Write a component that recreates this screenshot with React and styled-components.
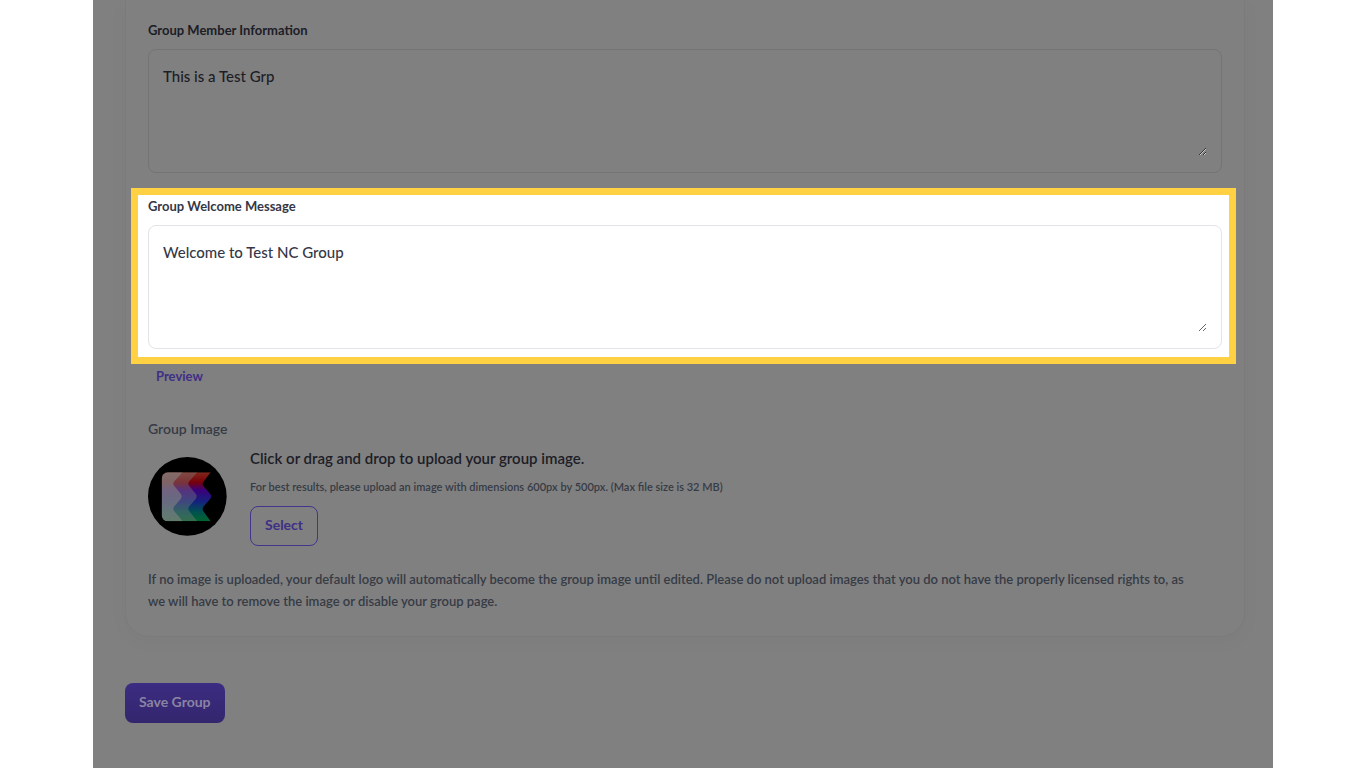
import React from 'react'
import styled, { createGlobalStyle } from 'styled-components'

const GlobalStyle = createGlobalStyle`
  * {
    box-sizing: border-box;
  }
  body {
    margin: 0;
    background: #fff;
    color: #1c1d26;
    font-family: Lato, 'Liberation Sans', sans-serif;
    font-size: 13px;
    font-weight: 500;
  }
  button, textarea {
    font-family: inherit;
    font-weight: inherit;
  }
`

const Page = styled.main`
  max-width: 1180px;
  min-height: 100vh;
  margin: 0 auto;
  padding: 0 28px 46px 32px;
  background: #808080;
`

const Card = styled.section`
  padding: 20px 22px 24px;
  border: 1px solid #7b7b7c;
  border-top: 0;
  border-radius: 0 0 24px 24px;
  box-shadow: 0 4px 20px rgba(0, 0, 0, 0.03);
`

const Field = styled.div`
  display: flex;
  flex-direction: column;
  gap: 9px;
`

const Highlight = styled.div`
  margin: 15px -14px 0 -17px;
  padding: 1px 7px 8px 10px;
  border: 7px solid #ffd143;
  background: #fff;
`

const Label = styled.label`
  color: ${props => props.$lit ? '#363746' : '#1c1d26'};
  font-size: 13px;
  font-weight: 700;
  line-height: 20px;
`

const TextBox = styled.div`
  display: flex;
  height: 124px;
  padding: 14px;
  border: 1px solid ${props => props.$lit ? '#e4e4e8' : '#747476'};
  border-radius: 8px;
`

const TextArea = styled.textarea`
  flex: 1;
  height: 92px;
  padding: 0;
  border: 0;
  outline: 0;
  background: transparent;
  color: ${props => props.$lit ? '#363746' : '#1c1d26'};
  font-size: 15px;
  line-height: 24px;
  resize: vertical;
`

const PreviewLink = styled.a`
  display: block;
  width: fit-content;
  margin: 2px 0 0 8px;
  color: #3f2f86;
  font-weight: 700;
  line-height: 20px;
  text-decoration: none;
`

const ImageHeading = styled.h2`
  margin: 33px 0 9px;
  color: #363b45;
  font-size: 14px;
  font-weight: 600;
  line-height: 20px;
`

const Upload = styled.div`
  display: flex;
  gap: 23px;
`

const Logo = styled.svg`
  flex: none;
  width: 79px;
  height: 79px;
  margin-top: 9px;
`

const UploadTitle = styled.p`
  margin: 0;
  font-size: 15px;
  font-weight: 600;
  line-height: 20px;
`

const UploadHint = styled.p`
  margin: 9px 0;
  color: #363b45;
  font-size: 11px;
  font-weight: 600;
  line-height: 20px;
`

const SelectButton = styled.button`
  height: 40px;
  padding: 0 14px 4px;
  border: 1px solid #44348c;
  border-radius: 8px;
  background: transparent;
  color: #3f2f86;
  font-size: 14px;
  font-weight: 700;
`

const Note = styled.p`
  margin: 22px 0 0;
  padding-right: 24px;
  color: #363b45;
  font-weight: 600;
  line-height: 22px;
`

const SaveButton = styled.button`
  height: 40px;
  margin-top: 46px;
  padding: 0 14px 4px;
  border: 0;
  border-radius: 8px;
  background: linear-gradient(#3c2c82, #33266d);
  color: #8a84a3;
  font-size: 14px;
  font-weight: 700;
`

const GroupLogo = () => (
  <Logo viewBox="0 0 237 237" role="img" aria-label="Group logo">
    <defs>
      <linearGradient id="bands" x1="0" y1="46" x2="0" y2="193" gradientUnits="userSpaceOnUse">
        <stop offset="0" stopColor="#80291b" />
        <stop offset="0.2" stopColor="#780008" />
        <stop offset="0.36" stopColor="#3c007c" />
        <stop offset="0.6" stopColor="#14227e" />
        <stop offset="0.8" stopColor="#005052" />
        <stop offset="1" stopColor="#00662c" />
      </linearGradient>
      <clipPath id="badge">
        <rect x="41" y="46" width="180" height="147" rx="19" />
      </clipPath>
    </defs>
    <circle cx="118" cy="118" r="118" />
    <g clipPath="url(#badge)">
      <path d="M41 46H188L166 75Q162 81 166 87L187 111Q192 118 187 125L166 149Q162 156 166 163L188 193H41Z" fill="url(#bands)" />
      <path d="M41 46H148L124 73Q118 80 124 87L143 110Q149 118 143 126L124 148Q118 155 124 163L148 193H41Z" fill="#808080" fillOpacity="0.4" />
      <path d="M41 46H104L79 73Q73 80 79 87L98 110Q104 118 98 126L79 148Q73 155 79 163L104 193H41Z" fill="#848484" fillOpacity="0.6" />
    </g>
  </Logo>
)

const MessageField = ({ id, label, value, lit }) => (
  <Field>
    <Label htmlFor={id} $lit={lit}>{label}</Label>
    <TextBox $lit={lit}>
      <TextArea id={id} defaultValue={value} $lit={lit} />
    </TextBox>
  </Field>
)

export default function App() {
  return (
    <>
      <GlobalStyle />
      <Page>
        <Card>
          <MessageField id="member-info" label="Group Member Information" value="This is a Test Grp" />
          <Highlight>
            <MessageField id="welcome-message" label="Group Welcome Message" value="Welcome to Test NC Group" lit />
          </Highlight>
          <PreviewLink href="#preview">Preview</PreviewLink>
          <ImageHeading>Group Image</ImageHeading>
          <Upload>
            <GroupLogo />
            <div>
              <UploadTitle>Click or drag and drop to upload your group image.</UploadTitle>
              <UploadHint>
                For best results, please upload an image with dimensions 600px by 500px. (Max file size is 32 MB)
              </UploadHint>
              <SelectButton type="button">Select</SelectButton>
            </div>
          </Upload>
          <Note>
            If no image is uploaded, your default logo will automatically become the group image until edited.
            Please do not upload images that you do not have the properly licensed rights to, as we will have to
            remove the image or disable your group page.
          </Note>
        </Card>
        <SaveButton type="button">Save Group</SaveButton>
      </Page>
    </>
  )
}
